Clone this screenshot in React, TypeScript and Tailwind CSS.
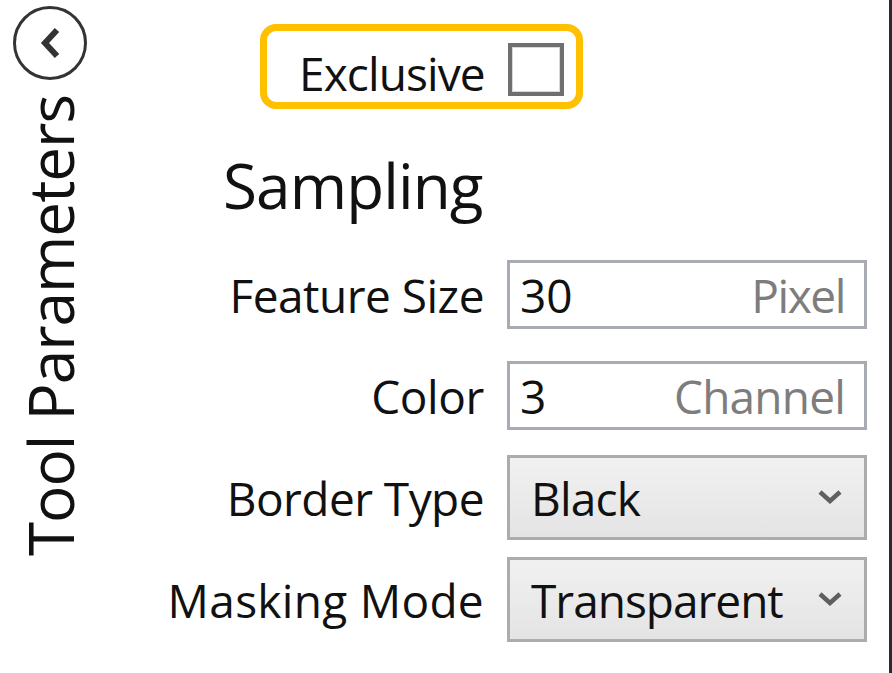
import { ReactNode } from 'react';

const font = { fontFamily: '"Open Sans", "Noto Sans", sans-serif' };

function TextBoxRow({
  label,
  value,
  unit,
  className,
  labelTrack,
  unitTrack,
}: {
  label: string;
  value: string;
  unit: string;
  className: string;
  labelTrack: string;
  unitTrack: string;
}) {
  return (
    <div className={`flex items-center ${className}`}>
      <div className={`w-[384px] text-right text-[46px] leading-none text-[#111] ${labelTrack}`}>{label}</div>
      <div className="ml-[23px] flex h-[69px] w-[360px] items-center justify-between border-[3px] border-[#a8abb2] bg-white pl-[10px] pr-[19px] text-[46px] leading-none">
        <span className="text-[#111]">{value}</span>
        <span className={`text-[#7d7d7d] ${unitTrack}`}>{unit}</span>
      </div>
    </div>
  );
}

function ComboRow({
  label,
  value,
  className,
  labelTrack,
  valueTrack,
}: {
  label: string;
  value: string;
  className: string;
  labelTrack: string;
  valueTrack: string;
}) {
  return (
    <div className={`flex items-center ${className}`}>
      <div className={`w-[384px] text-right text-[46px] leading-none text-[#111] ${labelTrack}`}>{label}</div>
      <div className="ml-[23px] flex h-[85px] w-[360px] items-center justify-between border-[3px] border-[#acacac] bg-gradient-to-b from-[#f1f1f1] to-[#e4e4e4] pl-[21px] pr-[22px] text-[46px] leading-none">
        <span className={`text-[#111] ${valueTrack}`}>{value}</span>
        <svg width="24" height="14" viewBox="0 0 24 14" className="mb-[2px]">
          <path d="M2 2 L12 11 L22 2" fill="none" stroke="#5f5f5f" strokeWidth="4.5" />
        </svg>
      </div>
    </div>
  );
}

function Highlight({ children }: { children: ReactNode }) {
  return (
    <div className="ml-[160px] mt-[24px] flex h-[85px] w-[323px] items-center rounded-[16px] border-[7px] border-[#ffc000] pl-[32px]">
      {children}
    </div>
  );
}

export default function App() {
  return (
    <div className="flex h-[673px] w-[892px] overflow-hidden border-r-[3px] border-[#2a2a2a] bg-white" style={font}>
      <aside className="flex w-[100px] shrink-0 flex-col items-center pt-[6px]">
        <button className="flex h-[74px] w-[74px] items-center justify-center rounded-full border-[3px] border-[#333]">
          <svg width="26" height="34" viewBox="0 0 26 34">
            <path d="M20 4 L8 17 L20 30" fill="none" stroke="#333" strokeWidth="6" />
          </svg>
        </button>
        <div className="flex h-[476px] items-end justify-center">
          <span className="rotate-180 whitespace-nowrap text-[62px] leading-none tracking-[-1px] text-[#111] [writing-mode:vertical-rl]">
            Tool Parameters
          </span>
        </div>
      </aside>

      <main className="flex-1">
        <Highlight>
          <span className="mt-[12px] text-[46px] leading-none tracking-[-0.9px] text-[#111]">Exclusive</span>
          <span className="ml-[23px] mt-[6px] h-[53px] w-[56px] border-[4px] border-[#6f6f6f] bg-white shadow-[inset_0_0_0_1px_#d8d8d8]" />
        </Highlight>

        <div className="ml-[123px] mt-[45px] text-[62px] leading-none tracking-[-0.9px] text-[#111]">Sampling</div>

        <TextBoxRow className="mt-[44px]" label="Feature Size" value="30" unit="Pixel" labelTrack="tracking-[-0.5px]" unitTrack="tracking-[-1.4px]" />
        <TextBoxRow className="mt-[32px]" label="Color" value="3" unit="Channel" labelTrack="tracking-[-0.4px]" unitTrack="tracking-[-0.8px]" />
        <ComboRow className="mt-[25px]" label="Border Type" value="Black" labelTrack="tracking-[-0.55px]" valueTrack="tracking-[-0.8px]" />
        <ComboRow className="mt-[17px]" label="Masking Mode" value="Transparent" labelTrack="tracking-[0.3px]" valueTrack="tracking-[-1px]" />
      </main>
    </div>
  );
}
